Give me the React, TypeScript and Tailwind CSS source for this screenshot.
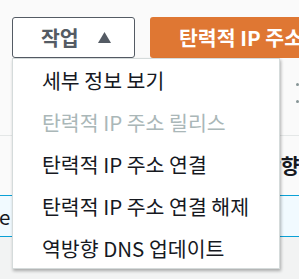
import React from "react";

const font = { fontFamily: '"Noto Sans CJK KR", "Noto Sans", sans-serif' };

export default function App() {
  const items = [
    { label: "세부 정보 보기", disabled: false },
    { label: "탄력적 IP 주소 릴리스", disabled: true },
    { label: "탄력적 IP 주소 연결", disabled: false },
    { label: "탄력적 IP 주소 연결 해제", disabled: false },
    { label: "역방향 DNS 업데이트", disabled: false },
  ];
  return (
    <div
      className="relative w-[299px] h-[279px] overflow-hidden bg-[#f2f3f3]"
      style={font}
    >
      {/* toolbar */}
      <div className="flex items-start gap-[15px] pl-[12px] pt-[17px] h-[59px] bg-[#fafafa]">
        <button className="flex items-center shrink-0 w-[123px] h-[41px] border border-[#545b64] rounded-[3px] bg-white pl-[28px] text-[20.5px] font-bold text-[#545b64] leading-none">
          <span>작업</span>
          <svg width="13" height="11" viewBox="0 0 13 11" className="ml-[19px]">
            <polygon points="6.5,0 13,11 0,11" fill="#545b64" />
          </svg>
        </button>
        <button className="flex items-center shrink-0 h-[41px] rounded-[3px] bg-[#df7733] pl-[29px] pr-[20px] text-[20.5px] font-bold text-white leading-none whitespace-nowrap">
          탄력적 IP 주소 할당
        </button>
      </div>
      {/* content rows behind */}
      <div className="flex flex-col bg-[#fafafa]">
        <div className="relative h-[77px] border-b border-[#e4e7e7]">
          <div className="absolute left-[296px] top-[24px] w-[3px] h-[3px] rounded-full bg-[#879596]" />
          <div className="absolute left-[296px] top-[41px] w-[3px] h-[3px] rounded-full bg-[#879596]" />
        </div>
        <div className="flex items-center h-[59px] pl-[243px] text-[20.5px] font-bold text-[#16191f] whitespace-nowrap">
          역방향
        </div>
        <div className="flex items-center h-[42px] border-y border-[#0aa1d6] bg-[#f1faff] text-[20.5px] text-[#16191f] whitespace-nowrap">
          <span className="-ml-[1px]">e</span>
        </div>
      </div>
      {/* dropdown menu */}
      <div className="absolute left-[12px] top-[58px] w-[268px] h-[211px] bg-white border border-[#d5dbdb] shadow-[1px_2px_3px_rgba(0,0,0,0.3)]">
        {items.map((it) => (
          <div
            key={it.label}
            className={`flex items-center h-[42px] pl-[29px] text-[20.5px] leading-none whitespace-nowrap ${
              it.disabled ? "text-[#aab7b8]" : "text-[#16191f]"
            }`}
          >
            {it.label}
          </div>
        ))}
      </div>
    </div>
  );
}
